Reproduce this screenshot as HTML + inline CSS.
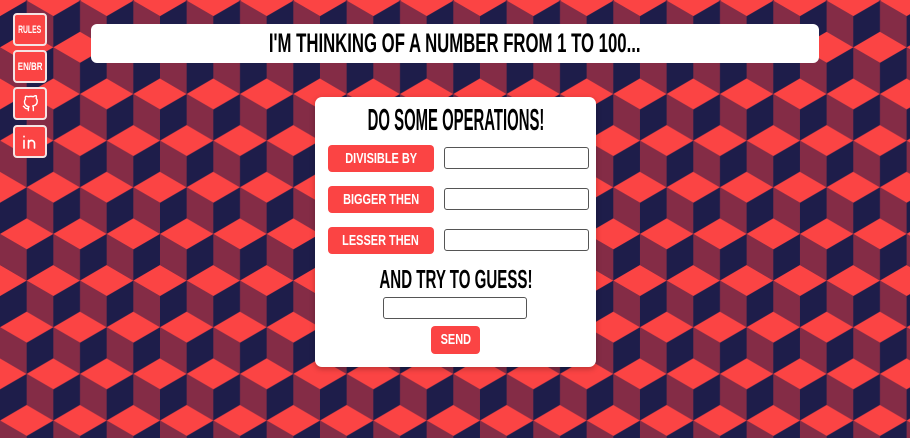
<!DOCTYPE html>
<html><head><meta charset="utf-8"><style>
*{margin:0;padding:0;box-sizing:border-box}
body{width:910px;height:438px;overflow:hidden;position:relative;font-family:"Liberation Sans",sans-serif;font-weight:bold;color:#000}
#bg{position:absolute;left:0;top:0}
.t{display:inline-block;white-space:nowrap;transform:scaleX(.55);transform-origin:center}
.side{position:absolute;left:13px;width:34px;height:33px;background:#fb4444;border:2px solid #f4e4e4;border-radius:4px;color:#fff;display:flex;align-items:center;justify-content:center;font-size:11px}
.banner{position:absolute;left:91px;top:24px;width:728px;height:39px;background:#fff;border-radius:6px;display:flex;justify-content:center;font-size:27px;line-height:39px}
.card{position:absolute;left:315px;top:97px;width:281px;height:270px;background:#fff;border-radius:7px;box-shadow:0 2px 6px rgba(0,0,0,.25)}
.h{position:absolute;left:0;width:100%;display:flex;justify-content:center}
.btn{position:absolute;left:13px;width:106px;height:27px;background:#fb4444;border-radius:4px;color:#fff;font-size:15px;display:flex;justify-content:center;line-height:27px}
.in{position:absolute;left:129px;width:145px;height:22px;border:1px solid #555;border-radius:3px;background:#fff}
</style></head><body>
<svg id="bg" width="910" height="438">
<defs><pattern id="p" width="53.33" height="93.3" patternUnits="userSpaceOnUse" patternTransform="translate(0,78.4)">
<rect width="53.33" height="93.3" fill="#1e1d4a"/>
<g id="c">
<polygon points="0,0 26.67,15.55 0,31.1 -26.67,15.55" fill="#fb4444"/>
<polygon points="-26.67,15.55 0,31.1 0,62.2 -26.67,46.65" fill="#842c46"/>
</g>
<use href="#c" x="53.33"/>
<use href="#c" y="93.3"/><use href="#c" x="53.33" y="93.3"/>
<use href="#c" y="-93.3"/><use href="#c" x="53.33" y="-93.3"/>
<use href="#c" x="26.67" y="46.65"/><use href="#c" x="26.67" y="-46.65"/>
</pattern></defs>
<rect width="910" height="438" fill="url(#p)"/>
</svg>
<div class="side" style="top:13px"><span class="t" style="transform:scaleX(.62)">RULES</span></div>
<div class="side" style="top:50px"><span class="t" style="transform:scaleX(.72)">EN/BR</span></div>
<div class="side" style="top:87px"><svg width="17" height="17" viewBox="0 0 24 24" fill="none" stroke="#fff" stroke-width="2" stroke-linecap="round" stroke-linejoin="round"><path d="M9 19c-5 1.5-5-2.5-7-3m14 6v-3.9a3.4 3.4 0 0 0-.9-2.6c3.1-.3 6.4-1.5 6.4-7a5.4 5.4 0 0 0-1.5-3.8 5 5 0 0 0-.1-3.8s-1.2-.3-3.9 1.5a13.4 13.4 0 0 0-7 0C6.3 1.6 5.1 2 5.1 2a5 5 0 0 0-.1 3.8A5.4 5.4 0 0 0 3.5 9.6c0 5.4 3.3 6.6 6.4 7a3.4 3.4 0 0 0-.9 2.6V22"/></svg></div>
<div class="side" style="top:125px"><svg width="18" height="18" viewBox="0 0 24 24" fill="none" stroke="#fff" stroke-width="2.2" stroke-linecap="round"><path d="M4 10v10M4 4.5v.5M10 20v-10M10 14a4 4 0 0 1 8 0v6"/></svg></div>
<div class="banner"><span class="t" style="transform:scaleX(.62)">I'M THINKING OF A NUMBER FROM 1 TO 100...</span></div>
<div class="card">
<div class="h" style="top:6px;font-size:31px;line-height:34px"><span class="t" style="transform:scaleX(.48)">DO SOME OPERATIONS!</span></div>
<div class="btn" style="top:48px"><span class="t" style="transform:scaleX(.73)">DIVISIBLE BY</span></div>
<div class="in" style="top:50px"></div>
<div class="btn" style="top:89px"><span class="t" style="transform:scaleX(.73)">BIGGER THEN</span></div>
<div class="in" style="top:91px"></div>
<div class="btn" style="top:130px"><span class="t" style="transform:scaleX(.73)">LESSER THEN</span></div>
<div class="in" style="top:132px"></div>
<div class="h" style="top:167px;font-size:26px;line-height:30px"><span class="t" style="transform:scaleX(.58)">AND TRY TO GUESS!</span></div>
<div class="in" style="top:200px;left:68px;width:144px"></div>
<div class="btn" style="top:229px;left:116px;width:49px;height:28px;line-height:28px"><span class="t" style="transform:scaleX(.73)">SEND</span></div>
</div>
</body></html>
